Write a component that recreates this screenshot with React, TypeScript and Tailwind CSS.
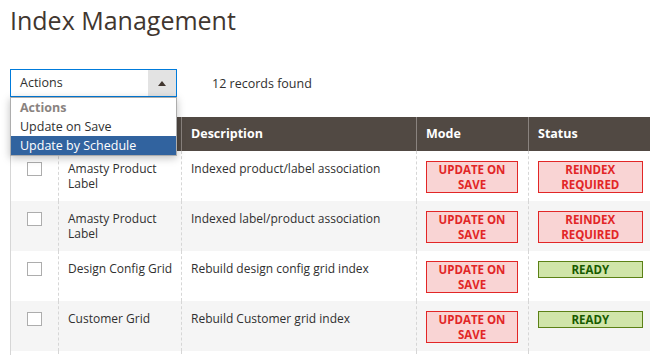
import React from "react";

type Row = { name: string; desc: string; status: "req" | "ready" | "none" };

const rows: Row[] = [
  { name: "Amasty Product Label", desc: "Indexed product/label association", status: "req" },
  { name: "Amasty Product Label", desc: "Indexed label/product association", status: "req" },
  { name: "Design Config Grid", desc: "Rebuild design config grid index", status: "ready" },
  { name: "Customer Grid", desc: "Rebuild Customer grid index", status: "ready" },
  { name: "", desc: "", status: "none" },
];

function Badge({ kind, children }: { kind: "red" | "green"; children: React.ReactNode }) {
  return (
    <div
      className={
        kind === "red"
          ? "border border-[#e22626] bg-[#f9d4d4] text-[#e22626] text-[11.5px] font-bold leading-[15px] text-center"
          : "border border-[#5b8116] bg-[#d0e5a9] text-[#185b00] text-[11.5px] font-bold leading-[15px] text-center"
      }
    >
      {children}
    </div>
  );
}

export default function App() {
  return (
    <div className="w-[650px] h-[355px] overflow-hidden bg-white relative font-['Open_Sans',sans-serif] text-[#303030]">
      <h1 className="pl-[10px] pt-[1px] text-[25px] font-normal leading-[38px] text-[#41362f]">Index Management</h1>
      <div className="flex items-center pl-[10px] mt-[30px] h-[28px]">
        <div className="relative w-[167px] h-[28px]">
          <div className="flex h-[28px] border border-[#007bdb] bg-white">
            <div className="flex-1 flex items-center pl-[9px] pt-[1px] text-[12.5px] text-[#303030]">Actions</div>
            <div className="w-[28px] bg-[#e3e3e3] flex items-center justify-center">
              <svg width="8" height="5" viewBox="0 0 8 5">
                <path d="M0 5 L4 0 L8 5 Z" fill="#41362f" />
              </svg>
            </div>
          </div>
          <div className="absolute left-0 top-[28px] w-[167px] z-10 bg-white border border-[#adadad] shadow-[0_2px_8px_rgba(0,0,0,0.25)] text-[12.5px] leading-[19px]">
            <div className="pl-[9px] font-bold text-[#8a837f]">Actions</div>
            <div className="pl-[9px] text-[#303030]">Update on Save</div>
            <div className="pl-[9px] bg-[#31639f] text-white">Update by Schedule</div>
          </div>
        </div>
        <div className="ml-[35px] pt-[2px] text-[12.5px] text-[#303030]">12 records found</div>
      </div>
      <div className="pl-[10px] mt-[20px]">
        <table className="border-collapse text-[12px] w-[660px] table-fixed">
          <colgroup>
            <col className="w-[48px]" />
            <col className="w-[123px]" />
            <col className="w-[235px]" />
            <col className="w-[112px]" />
            <col className="w-[142px]" />
          </colgroup>
          <thead>
            <tr className="bg-[#514943] text-white h-[34px] text-[12.5px]">
              <th className="border-l border-[#d6d6d6]"></th>
              <th></th>
              <th className="text-left font-bold pl-[9px] border-l border-[#8a837f]">Description</th>
              <th className="text-left font-bold pl-[9px] border-l border-[#8a837f]">Mode</th>
              <th className="text-left font-bold pl-[9px] border-l border-[#8a837f]">Status</th>
            </tr>
          </thead>
          <tbody>
            {rows.map((r, i) => (
              <tr key={i} className={i % 2 === 1 ? "bg-[#f5f5f5] h-[50px]" : "bg-white h-[50px]"}>
                <td className="align-top border-l border-[#d6d6d6] pt-[11px]">
                  {r.status !== "none" && (
                    <div className="ml-[16px] w-[15px] h-[14px] border border-[#adadad] bg-white"></div>
                  )}
                </td>
                <td className="align-top pt-[10px] pl-[9px] pr-[2px] leading-[15px] border-l border-dashed border-[#d6d6d6]">
                  {r.name}
                </td>
                <td className="align-top pt-[10px] pl-[9px] leading-[15px] border-l border-dashed border-[#d6d6d6]">
                  {r.desc}
                </td>
                <td className="align-top pt-[10px] pl-[9px] pr-[10px] border-l border-dashed border-[#d6d6d6]">
                  {r.status !== "none" && (
                    <Badge kind="red">
                      UPDATE ON
                      <br />
                      SAVE
                    </Badge>
                  )}
                </td>
                <td className="align-top pt-[10px] pl-[9px] pr-[28px] border-l border-dashed border-[#d6d6d6]">
                  {r.status === "req" && (
                    <Badge kind="red">
                      REINDEX
                      <br />
                      REQUIRED
                    </Badge>
                  )}
                  {r.status === "ready" && <Badge kind="green">READY</Badge>}
                </td>
              </tr>
            ))}
          </tbody>
        </table>
      </div>
    </div>
  );
}
